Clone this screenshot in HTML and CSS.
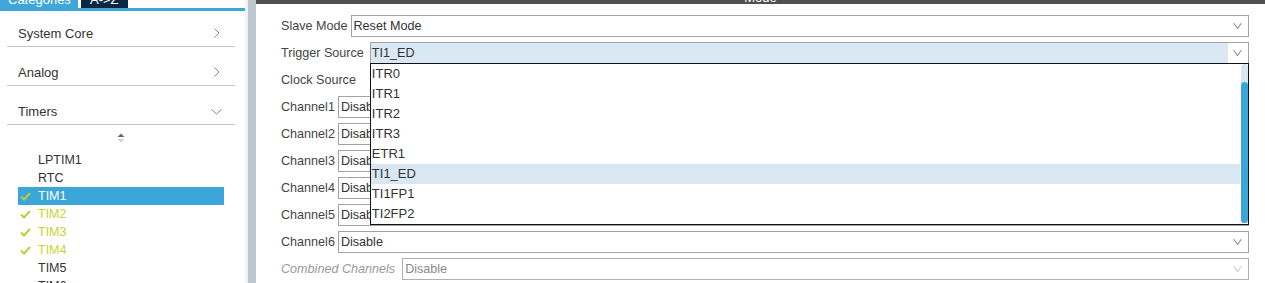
FILE: index.html
```html
<!DOCTYPE html>
<html lang="en">
<head>
    <meta charset="UTF-8">
    <title>TIM1 Mode</title>
    <link rel="stylesheet" href="styles.css">
</head>
<body>

<aside class="sidebar">
    <div class="tabs">
        <div class="tab tab-light"><span>Categories</span></div>
        <div class="tab tab-dark"><span>A-&gt;Z</span></div>
    </div>
    <div class="tabs-line"></div>

    <ul class="cats">
        <li class="cat first">System Core
            <svg class="chev" width="6" height="10" viewBox="0 0 6 10"><polyline points="0.5,0.5 5,5 0.5,9.5" fill="none" stroke="#8a8a8a" stroke-width="1"/></svg>
        </li>
        <li class="cat">Analog
            <svg class="chev" width="6" height="10" viewBox="0 0 6 10"><polyline points="0.5,0.5 5,5 0.5,9.5" fill="none" stroke="#8a8a8a" stroke-width="1"/></svg>
        </li>
        <li class="cat">Timers
            <svg class="chev chev-down" width="11" height="6" viewBox="0 0 11 6"><polyline points="0.5,0.5 5.5,5 10.5,0.5" fill="none" stroke="#8a8a8a" stroke-width="1"/></svg>
        </li>
    </ul>

    <div class="sorter">
        <svg width="8" height="10" viewBox="0 0 8 10"><polygon points="0.5,4 4,0.5 7.5,4" fill="#6b6b6b"/><polygon points="0.5,6 4,9.5 7.5,6" fill="#cfcfcf"/></svg>
    </div>

    <ul class="periph">
        <li class="item">LPTIM1</li>
        <li class="item">RTC</li>
        <li class="item selected"><svg class="tick" width="11" height="9" viewBox="0 0 11 9"><polyline points="1,4.5 4,7.5 10,1" fill="none" stroke="#b8d03a" stroke-width="2"/></svg>TIM1</li>
        <li class="item on"><svg class="tick" width="11" height="9" viewBox="0 0 11 9"><polyline points="1,4.5 4,7.5 10,1" fill="none" stroke="#b8d03a" stroke-width="2"/></svg>TIM2</li>
        <li class="item on"><svg class="tick" width="11" height="9" viewBox="0 0 11 9"><polyline points="1,4.5 4,7.5 10,1" fill="none" stroke="#b8d03a" stroke-width="2"/></svg>TIM3</li>
        <li class="item on"><svg class="tick" width="11" height="9" viewBox="0 0 11 9"><polyline points="1,4.5 4,7.5 10,1" fill="none" stroke="#b8d03a" stroke-width="2"/></svg>TIM4</li>
        <li class="item">TIM5</li>
        <li class="item">TIM6</li>
    </ul>
</aside>

<div class="edge"></div>
<div class="divider"></div>

<main class="panel">
    <div class="panel-head"><span>Mode</span></div>

    <div class="form">
        <div class="row">
            <label>Slave Mode</label>
            <div class="select"><span>Reset Mode</span><i class="arrow"></i></div>
        </div>
        <div class="row">
            <label class="label-trigger">Trigger Source</label>
            <div class="select open">
                <span>TI1_ED</span><i class="arrow"></i>
                <div class="dropdown">
                    <ul class="options">
                        <li>ITR0</li>
                        <li>ITR1</li>
                        <li>ITR2</li>
                        <li>ITR3</li>
                        <li>ETR1</li>
                        <li class="hover">TI1_ED</li>
                        <li>TI1FP1</li>
                        <li>TI2FP2</li>
                    </ul>
                    <div class="scroll"><div class="thumb"></div></div>
                </div>
            </div>
        </div>
        <div class="row">
            <label>Clock Source</label>
        </div>
        <div class="row">
            <label>Channel1</label>
            <div class="select"><span>Disable</span><i class="arrow"></i></div>
        </div>
        <div class="row">
            <label>Channel2</label>
            <div class="select"><span>Disable</span><i class="arrow"></i></div>
        </div>
        <div class="row">
            <label>Channel3</label>
            <div class="select"><span>Disable</span><i class="arrow"></i></div>
        </div>
        <div class="row">
            <label>Channel4</label>
            <div class="select"><span>Disable</span><i class="arrow"></i></div>
        </div>
        <div class="row">
            <label>Channel5</label>
            <div class="select"><span>Disable</span><i class="arrow"></i></div>
        </div>
        <div class="row">
            <label>Channel6</label>
            <div class="select"><span>Disable</span><i class="arrow"></i></div>
        </div>
        <div class="row disabled">
            <label>Combined Channels</label>
            <div class="select"><span>Disable</span><i class="arrow"></i></div>
        </div>
    </div>
</main>

</body>
</html>
```

FILE: styles.css
```css
body {
    margin: 0;
    height: 283px;
    overflow: hidden;
    display: flex;
    font-family: "Liberation Sans", Arial, sans-serif;
    background: #ffffff;
    color: #333;
}

ul {
    list-style: none;
    margin: 0;
    padding: 0;
}

/* Left tree */
.sidebar {
    width: 245px;
    flex-shrink: 0;
    background: #ffffff;
}

.tabs {
    display: flex;
    gap: 3px;
    height: 8px;
}

.tab {
    height: 8px;
    overflow: hidden;
    color: #ffffff;
    font-size: 13px;
    line-height: 16px;
}

.tab span {
    display: block;
    margin-top: -8px;
}

.tab-light {
    width: 70px;
    padding-left: 8px;
    background: #3ea7da;
}

.tab-dark {
    width: 38px;
    padding-left: 9px;
    background: #0b2744;
}

.tabs-line {
    height: 3px;
    width: 247px;
    background: #3ea7da;
}

.cats {
    margin: 0 10px 0 7px;
}

.cat {
    position: relative;
    height: 16px;
    padding: 18px 0 4px 11px;
    border-bottom: 1px solid #c4c4c4;
    font-size: 13px;
    line-height: 16px;
    color: #333;
}

.cat.first {
    padding-top: 15px;
}

.chev {
    position: absolute;
    right: 15px;
    top: 20px;
}

.cat.first .chev {
    top: 17px;
}

.chev-down {
    right: 13px;
    top: 23px;
}

.sorter {
    height: 26px;
    padding-left: 117px;
    display: flex;
    align-items: center;
}

.periph {
    margin-left: 18px;
    width: 206px;
}

.item {
    display: flex;
    align-items: center;
    height: 18px;
    padding-left: 20px;
    font-size: 12.5px;
    color: #333;
}

.tick {
    margin-left: -18px;
    margin-right: 7px;
}

.item.selected {
    background: #3aa6da;
    color: #ffffff;
}

.item.on {
    color: #c4d42f;
}

.edge {
    width: 3px;
    flex-shrink: 0;
    background: #eef2f4;
}

.divider {
    width: 8px;
    flex-shrink: 0;
    background: #bdc7cd;
}

/* Right panel */
.panel {
    flex: 1;
    min-width: 0;
    position: relative;
}

.panel-head {
    height: 4px;
    overflow: hidden;
    background: #505050;
    color: #ffffff;
    font-size: 13px;
    line-height: 16px;
    text-align: center;
}

.panel-head span {
    display: block;
    margin-top: -10px;
}

.form {
    display: flex;
    flex-direction: column;
    gap: 5px;
    padding: 11px 16px 0 25px;
}

.row {
    display: flex;
    align-items: center;
    gap: 3px;
    height: 22px;
    font-size: 12.6px;
}

.row label {
    color: #444;
    white-space: nowrap;
}

.row .label-trigger {
    margin-right: 3px;
}

.select {
    flex: 1;
    position: relative;
    height: 20px;
    border: 1px solid #a2a2a2;
    background: #ffffff;
    line-height: 20px;
    padding-left: 2px;
    color: #333;
}

.arrow {
    position: absolute;
    right: 0;
    top: 0;
    width: 20px;
    height: 20px;
    background: #ffffff;
}

.arrow::before {
    content: "";
    position: absolute;
    left: 6px;
    top: 4px;
    width: 6px;
    height: 6px;
    border-right: 1px solid #8a8a8a;
    border-bottom: 1px solid #8a8a8a;
    transform: rotate(45deg) skew(8deg, 8deg);
}

.select.open {
    background: #dae8f4;
    padding-left: 1px;
}

.dropdown {
    position: absolute;
    left: -1px;
    right: -1px;
    top: 20px;
    border: 1px solid #111;
    background: #ffffff;
    z-index: 2;
}

.options {
    margin-right: 8px;
}

.options li {
    height: 20px;
    line-height: 20px;
    padding-left: 1px;
    font-size: 13px;
    color: #333;
}

.options li.hover {
    background: #d9e7f3;
}

.scroll {
    position: absolute;
    right: 0;
    top: 0;
    bottom: 1px;
    width: 7px;
    background: #d6e6f3;
    border-radius: 4px 4px 0 0;
}

.thumb {
    position: absolute;
    left: 0;
    right: 0;
    top: 18px;
    bottom: 0;
    background: #3ba6da;
    border-radius: 4px;
}

.row.disabled label {
    color: #9a9a9a;
    font-style: italic;
    margin-right: 4px;
}

.row.disabled .select {
    color: #8a8a8a;
    border-color: #b0b0b0;
}

.row.disabled .arrow::before {
    border-color: #c8c8c8;
}
```
